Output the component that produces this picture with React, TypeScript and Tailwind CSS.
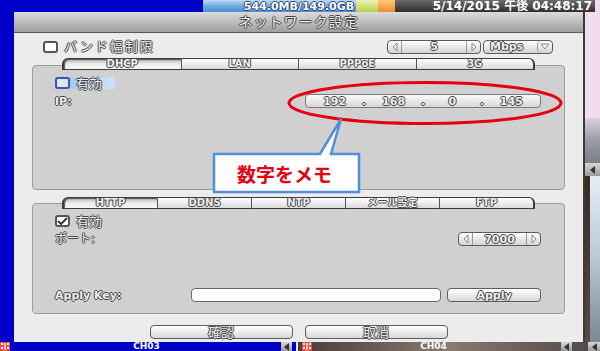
import React from "react";

const emb =
  "text-[#efefef] [text-shadow:-1px_0_#444,1px_0_#444,0_-1px_#444,0_1px_#444]";

function Tri({ dir }: { dir: "l" | "r" | "d" }) {
  const pts = dir === "l" ? "6,1 2,5 6,9" : dir === "r" ? "2,1 6,5 2,9" : "1,2 5,7 9,2";
  return (
    <svg width={dir === "d" ? 10 : 8} height="10" viewBox={dir === "d" ? "0 0 10 10" : "0 0 8 10"}>
      <polygon points={pts} fill="#f4f4f4" stroke="#8a8a8a" strokeWidth="1" />
    </svg>
  );
}

function Spinner({ value, className }: { value: string; className: string }) {
  return (
    <div
      className={`flex h-[14px] rounded-[4px] border border-[#5a5a5a] bg-linear-to-b from-white to-[#d4d4d4] overflow-hidden ${className}`}
    >
      <div className="w-[14px] flex items-center justify-center border-r border-[#9a9a9a]">
        <Tri dir="l" />
      </div>
      <div className={`flex-1 flex items-center justify-center text-[11px] leading-none ${emb}`}>{value}</div>
      <div className="w-[14px] flex items-center justify-center border-l border-[#9a9a9a]">
        <Tri dir="r" />
      </div>
    </div>
  );
}

function Check({ checked, blue }: { checked?: boolean; blue?: boolean }) {
  return (
    <div
      className={`w-[15px] h-[12px] rounded-[3px] border-2 flex items-center justify-center shrink-0 ${
        blue ? "border-[#3a58a8] bg-[#dce8f8]" : "border-[#555555] bg-white"
      }`}
    >
      {checked && (
        <svg width="11" height="9" viewBox="0 0 11 9">
          <polyline points="1,4 4,7 10,1" fill="none" stroke="#3a3a3a" strokeWidth="2" />
        </svg>
      )}
    </div>
  );
}

function Tabs({ items, sel }: { items: string[]; sel: number }) {
  return (
    <div className="relative z-10 flex h-[12px] mx-[48px]">
      {items.map((t, i) => {
        const first = i === 0;
        const last = i === items.length - 1;
        return (
          <div
            key={t}
            className={`flex-1 flex items-center justify-center text-[10px] leading-[10px] border-t border-b border-[#3c3c3c] ${
              first ? "border-l-2 rounded-tl-[6px]" : ""
            } ${last ? "border-r-2 rounded-tr-[6px]" : "border-r border-r-[#555555]"} ${
              i === sel
                ? "bg-linear-to-b from-[#b0b0b0] via-[#eeeeee] to-[#f6f6f6] shadow-[inset_1px_1px_1px_#555]"
                : "bg-linear-to-b from-white to-[#dadada]"
            } ${emb}`}
          >
            {t}
          </div>
        );
      })}
    </div>
  );
}

function Btn({ label, className }: { label: string; className: string }) {
  return (
    <div
      className={`h-[14px] rounded-[4px] border border-[#5e5e5e] bg-linear-to-b from-white to-[#d8d8d8] flex items-center justify-center leading-none ${emb} ${className}`}
    >
      {label}
    </div>
  );
}

function Film() {
  return (
    <svg width="10" height="9" viewBox="0 0 10 9" className="shrink-0">
      <rect x="0" y="0" width="10" height="9" fill="#e8503c" />
      <rect x="1" y="1" width="2" height="2" fill="#fff" />
      <rect x="1" y="5" width="2" height="2" fill="#fff" />
      <rect x="7" y="1" width="2" height="2" fill="#fff" />
      <rect x="7" y="5" width="2" height="2" fill="#fff" />
      <rect x="4" y="1" width="2" height="7" fill="#f8c0b0" />
    </svg>
  );
}

function Speaker({ className }: { className: string }) {
  return (
    <div className={`flex items-center justify-center bg-linear-to-b from-[#d8d8d8] to-[#9a9a9a] ${className}`}>
      <svg width="7" height="8" viewBox="0 0 7 8">
        <polygon points="6,0 1,4 6,8" fill="#333" />
      </svg>
    </div>
  );
}

export default function App() {
  return (
    <div className="w-[600px] h-[351px] overflow-hidden bg-[#0000c8] flex flex-col font-['DejaVu_Sans','Noto_Sans_CJK_JP',sans-serif] font-bold">
      {/* top status bar */}
      <div className="h-[12px] flex shrink-0">
        <div className="w-[203px] bg-[#0000c8]" />
        <div className="relative w-[192px] flex">
          <div className="w-[153px] bg-linear-to-b from-[#c0dcf6] via-[#70a8e2] to-[#4f8cd2]" />
          <div className="w-[22px] bg-linear-to-b from-[#eef4b0] to-[#b6d04a]" />
          <div className="w-[17px] bg-linear-to-b from-[#ffc878] to-[#f08c20]" />
          <span className="absolute inset-0 flex items-center justify-center text-[11px] leading-none text-white [text-shadow:-1px_0_#2a4a7a,1px_0_#2a4a7a,0_-1px_#2a4a7a,0_1px_#2a4a7a]">
            544.0MB/149.0GB
          </span>
        </div>
        <div className="flex-1 bg-linear-to-b from-[#6c6c6c] to-[#303030] flex items-center justify-end pr-[3px] text-white text-[12px] leading-none">
          5/14/2015 午後 04:48:17
        </div>
        <div className="w-[5px] bg-[#f0d8ee]" />
      </div>

      {/* middle */}
      <div className="h-[330px] flex shrink-0 relative">
        <div className="w-[14px] bg-[#0000c8]" />
        {/* dialog */}
        <div className="w-[569px] flex flex-col bg-[#ececec]">
          <div className="h-[21px] shrink-0 bg-linear-to-b from-[#dcdcdc] to-[#9e9e9e] border-b border-[#5a5a5a] flex items-center justify-center">
            <span className={`text-[14px] leading-none tracking-[1px] font-normal ${emb}`}>ネットワーク設定</span>
          </div>
          <div className="flex-1 flex flex-col">
            {/* row 1 */}
            <div className="flex items-center h-[13px] mt-[7px] pl-[29px] pr-[30px]">
              <Check />
              <span className={`ml-[6px] text-[13px] leading-none tracking-[2px] font-normal ${emb}`}>バンド幅制限</span>
              <div className="flex-1" />
              <Spinner value="5" className="w-[94px]" />
              <div className="ml-[2px] w-[70px] h-[14px] flex rounded-[4px] border border-[#5a5a5a] bg-linear-to-b from-white to-[#d4d4d4] overflow-hidden">
                <div className={`flex-1 flex items-center pl-[6px] text-[11px] leading-none ${emb}`}>Mbps</div>
                <div className="w-[15px] flex items-center justify-center border-l border-[#9a9a9a] rounded-[4px]">
                  <Tri dir="d" />
                </div>
              </div>
            </div>

            {/* tabs 1 */}
            <div className="mt-[5px] -mb-[5px]">
              <Tabs items={["DHCP", "LAN", "PPPoE", "3G"]} sel={0} />
            </div>
            <div className="mx-[18px] h-[125px] shrink-0 rounded-[4px] border border-[#9a9a9a] bg-[#d0d0d0] pt-[11px] pl-[22px] pr-[23px] flex flex-col">
              <div className="h-[12px] w-[60px] flex items-center rounded-[2px] bg-linear-to-r from-[#92c0f0] to-[#cfe4fa]">
                <Check blue />
                <span className={`ml-[6px] text-[13px] leading-none font-normal ${emb}`}>有効</span>
              </div>
              <div className="mt-[5px] h-[14px] flex items-center">
                <span className={`text-[11px] leading-none ${emb}`}>IP:</span>
                <div className="ml-auto w-[236px] h-[14px] rounded-[4px] border border-[#7a7a7a] bg-linear-to-b from-[#fafafa] to-[#d8d8d8] px-[14px] grid grid-cols-7">
                  {["192", ".", "168", ".", "0", ".", "145"].map((v, i) => (
                    <span key={i} className={`flex items-center justify-center text-[11px] leading-none ${emb}`}>
                      {v}
                    </span>
                  ))}
                </div>
              </div>
            </div>

            {/* tabs 2 */}
            <div className="mt-[7px] -mb-[6px]">
              <Tabs items={["HTTP", "DDNS", "NTP", "メール設定", "FTP"]} sel={0} />
            </div>
            <div className="mx-[18px] h-[111px] shrink-0 rounded-[4px] border border-[#9a9a9a] bg-[#d0d0d0] pt-[11px] pb-[11px] pl-[22px] pr-[23px] flex flex-col">
              <div className="h-[12px] flex items-center">
                <Check checked />
                <span className={`ml-[6px] text-[13px] leading-none font-normal ${emb}`}>有効</span>
              </div>
              <div className="mt-[5px] h-[14px] flex items-center">
                <span className={`text-[12px] leading-none font-normal ${emb}`}>ポート:</span>
                <Spinner value="7000" className="ml-auto w-[83px]" />
              </div>
              <div className="mt-auto h-[14px] flex items-center">
                <span className={`w-[136px] text-[11px] leading-none ${emb}`}>Apply Key:</span>
                <div className="w-[250px] h-[14px] rounded-[4px] border border-[#6a6a6a] bg-white" />
                <Btn label="Apply" className="ml-auto w-[94px] text-[11px]" />
              </div>
            </div>

            {/* buttons */}
            <div className="mt-[11px] flex justify-center gap-[12px]">
              <Btn label="確認" className="w-[143px] text-[13px] font-normal" />
              <Btn label="取消" className="w-[143px] text-[13px] font-normal" />
            </div>
          </div>
        </div>
        {/* right camera strip */}
        <div className="w-[17px] flex flex-col border-l-2 border-[#3a3a3a]">
          <div className="h-[106px] bg-[#f4dcf0]" />
          <div className="h-[45px] bg-linear-to-b from-[#d8d4dc] via-[#9a9aa2] to-[#7c8088]" />
          <Speaker className="h-[13px] w-full" />
          <div className="flex-1 flex">
            <div className="w-[5px] bg-linear-to-b from-[#3a2a22] to-[#5a4a40]" />
            <div className="flex-1 bg-linear-to-b from-[#e4eef6] via-[#b8c8d4] to-[#7a8896]" />
          </div>
        </div>

        {/* red ellipse annotation */}
        <svg className="absolute left-[286px] top-[68px]" width="278" height="46" viewBox="0 0 278 46">
          <ellipse cx="139" cy="23" rx="136" ry="20.5" fill="none" stroke="#e6000f" strokeWidth="3" />
        </svg>
        {/* callout */}
        <svg className="absolute left-[210px] top-[104px]" width="154" height="80" viewBox="210 116 154 80">
          <path
            d="M214 154 L320 154 L341 119 L331 154 L359 154 L359 192 L214 192 Z"
            fill="#ffffff"
            stroke="#4f8fdc"
            strokeWidth="2.5"
            strokeLinejoin="miter"
          />
        </svg>
        <div className="absolute left-[214px] top-[143px] w-[145px] h-[37px] flex items-center justify-center pr-[4px] text-[19px] leading-none text-[#e60012] font-['Noto_Sans_CJK_JP',sans-serif] font-bold">
          数字をメモ
        </div>
      </div>

      {/* bottom strip */}
      <div className="h-[9px] flex shrink-0 overflow-hidden">
        <div className="w-[296px] bg-[#0000c8] flex">
          <Film />
          <span className="flex-1 text-center text-white text-[9px] leading-[9px] pl-[2px]">CH03</span>
          <Speaker className="w-[11px] h-[9px] mr-[4px]" />
        </div>
        <div className="w-[2px] bg-[#e8e8e8]" />
        <div className="flex-1 flex bg-linear-to-r from-[#4a3c3a] via-[#8a7a70] to-[#4e4646]">
          <div className="ml-[4px]">
            <Film />
          </div>
          <span className="flex-1 text-center text-white text-[9px] leading-[9px] pr-[6px]">CH04</span>
          <Speaker className="w-[11px] h-[9px] mr-[16px]" />
          <Speaker className="w-[12px] h-[9px]" />
        </div>
      </div>
    </div>
  );
}
